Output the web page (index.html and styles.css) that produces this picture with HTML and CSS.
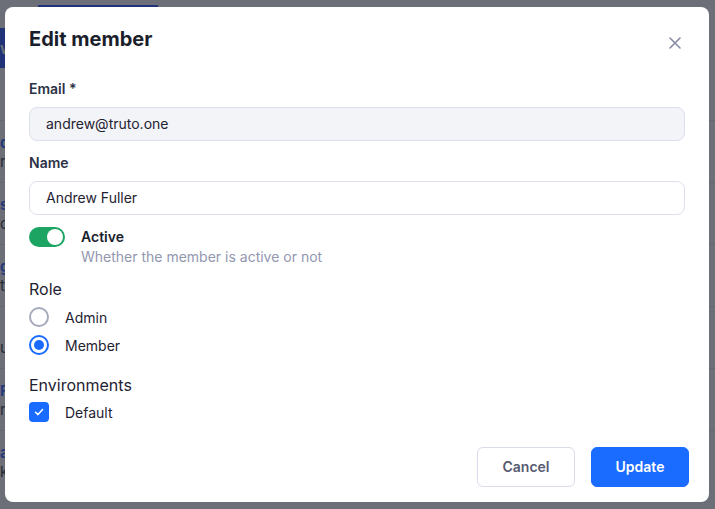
FILE: index.html
```html
<!DOCTYPE html>
<html lang="en">
<head>
<meta charset="utf-8">
<title>Edit member</title>
<link rel="stylesheet" href="styles.css">
</head>
<body>
<div class="page">
  <div class="page-top"><span class="top-btn"></span></div>
  <div class="page-head"><span class="head-btn">w</span></div>
  <div class="page-list">
    <div class="page-row"><b>d</b><span>r.</span></div>
    <div class="page-row"><b>s</b><span>ot</span></div>
    <div class="page-row"><b>g</b><span>t</span></div>
    <div class="page-row"><b></b><span>u</span></div>
    <div class="page-row"><b>F</b><span>ru</span></div>
    <div class="page-row"><b>al</b><span>k</span></div>
  </div>
</div>
<div class="overlay"></div>
<div class="modal">
  <div class="modal-header">
    <h2 class="modal-title">Edit member</h2>
    <button class="close-btn" aria-label="Close">
      <svg width="14" height="14" viewBox="0 0 14 14"><path d="M2 2L12 12M12 2L2 12" stroke="#858aa3" stroke-width="1.6" stroke-linecap="round"/></svg>
    </button>
  </div>
  <div class="field">
    <label class="field-label">Email *</label>
    <div class="input input-disabled">andrew@truto.one</div>
  </div>
  <div class="field field-name">
    <label class="field-label">Name</label>
    <div class="input">Andrew Fuller</div>
  </div>
  <div class="toggle-row">
    <span class="toggle"><span class="knob"></span></span>
    <div class="toggle-text">
      <div class="toggle-title">Active</div>
      <div class="toggle-desc">Whether the member is active or not</div>
    </div>
  </div>
  <div class="group">
    <div class="group-title">Role</div>
    <div class="options">
      <div class="option"><span class="radio"></span><span>Admin</span></div>
      <div class="option"><span class="radio radio-on"></span><span>Member</span></div>
    </div>
  </div>
  <div class="group group-env">
    <div class="group-title">Environments</div>
    <div class="option"><span class="check"><svg width="12" height="12" viewBox="0 0 12 12"><path d="M2.5 6.2L5 8.6L9.6 3.6" fill="none" stroke="#fff" stroke-width="1.5" stroke-linecap="round" stroke-linejoin="round"/></svg></span><span>Default</span></div>
  </div>
  <div class="modal-footer">
    <button class="btn btn-cancel">Cancel</button>
    <button class="btn btn-primary">Update</button>
  </div>
</div>
</body>
</html>
```
FILE: styles.css
```css
* { box-sizing: border-box; }
html, body { margin: 0; padding: 0; }
body {
  width: 715px;
  height: 509px;
  overflow: hidden;
  font-family: Inter, "Noto Sans", sans-serif;
  background: #ffffff;
  position: relative;
}
.page { width: 715px; height: 509px; }
.page-top { height: 28px; padding-top: 5px; }
.top-btn { display: block; margin-left: 38px; width: 120px; height: 3px; background: #0a3cff; }
.page-head { height: 40px; }
.head-btn {
  display: block; width: 40px; height: 40px; background: #0a3cff; color: #fff;
  font-size: 16px; line-height: 40px; padding-left: 0; font-weight: 600;
  overflow: hidden;
}
.page-list { margin-top: 52px; }
.page-row {
  height: 62px;
  border-top: 1px solid #e3e5ea;
  display: flex; flex-direction: column; justify-content: center;
  font-size: 15px; line-height: 19px;
}
.page-row b { color: #1a55ff; font-weight: 700; min-height: 19px; }
.page-row span { color: #222; }
.overlay {
  position: absolute; inset: 0;
  background: rgba(42, 46, 60, 0.69);
}
.modal {
  position: absolute;
  left: 5px; top: 7px;
  width: 704px; height: 495px;
  background: #fff;
  border-radius: 8px;
  padding: 18px 24px 15px 24px;
  display: flex; flex-direction: column;
  color: #1f2232;
}
.modal-header { display: flex; align-items: center; justify-content: space-between; height: 28px; }
.modal-title { margin: 0; font-size: 20px; line-height: 28px; font-weight: 700; color: #1b1e2b; letter-spacing: 0; }
.close-btn {
  border: 0; background: none; padding: 0; width: 14px; height: 14px;
  margin-right: 3px; margin-top: 8px; display: flex;
}
.field { margin-top: 26px; display: flex; flex-direction: column; }
.field-name { margin-top: 12px; }
.field-label { font-size: 14px; line-height: 20px; font-weight: 600; color: #2c3146; }
.input {
  margin-top: 8px;
  height: 34px;
  border: 1px solid #dde0ea;
  border-radius: 8px;
  padding: 0 16px;
  font-size: 14px; line-height: 32px;
  color: #1f2232;
  background: #fff;
}
.input-disabled { background: #f3f4f8; }
.toggle-row { display: flex; margin-top: 12px; }
.toggle {
  width: 36px; height: 20px; border-radius: 10px; background: #1ba462;
  position: relative; flex: none; margin-right: 16px;
}
.knob {
  position: absolute; right: 2px; top: 2px; width: 16px; height: 16px;
  border-radius: 50%; background: #fff;
}
.toggle-title { font-size: 14px; line-height: 20px; font-weight: 600; color: #1b1e2b; }
.toggle-desc { font-size: 14px; line-height: 20px; color: #9297b0; }
.group { margin-top: 10px; display: flex; flex-direction: column; }
.group-env { margin-top: 14px; }
.group-title { font-size: 16px; line-height: 24px; color: #1f2232; }
.options { padding-top: 2px; }
.option { display: flex; align-items: center; height: 28px; font-size: 14px; color: #1f2232; }
.group-env .option { height: 26px; margin-top: 2px; }
.radio {
  width: 20px; height: 20px; border-radius: 50%; border: 2px solid #a5aabd;
  margin-right: 16px; flex: none; position: relative; background: #fff;
}
.radio-on { border-color: #1a6bff; }
.radio-on::after {
  content: ""; position: absolute; left: 3px; top: 3px; width: 10px; height: 10px;
  border-radius: 50%; background: #1a6bff;
}
.check {
  width: 20px; height: 20px; border-radius: 4px; background: #1a6bff;
  margin-right: 16px; flex: none; display: flex; align-items: center; justify-content: center;
}
.modal-footer { margin-top: auto; display: flex; justify-content: flex-end; gap: 16px; margin-right: -4px; }
.btn {
  width: 98px; height: 40px; border-radius: 6px;
  font-family: Inter, "Noto Sans", sans-serif; font-size: 14px; font-weight: 600;
  padding: 0 0 1px 0;
}
.btn-cancel { background: #fff; border: 1px solid #d9dcea; color: #565b70; }
.btn-primary { background: #1a6bff; border: 1px solid #1a6bff; color: #fff; }
```
